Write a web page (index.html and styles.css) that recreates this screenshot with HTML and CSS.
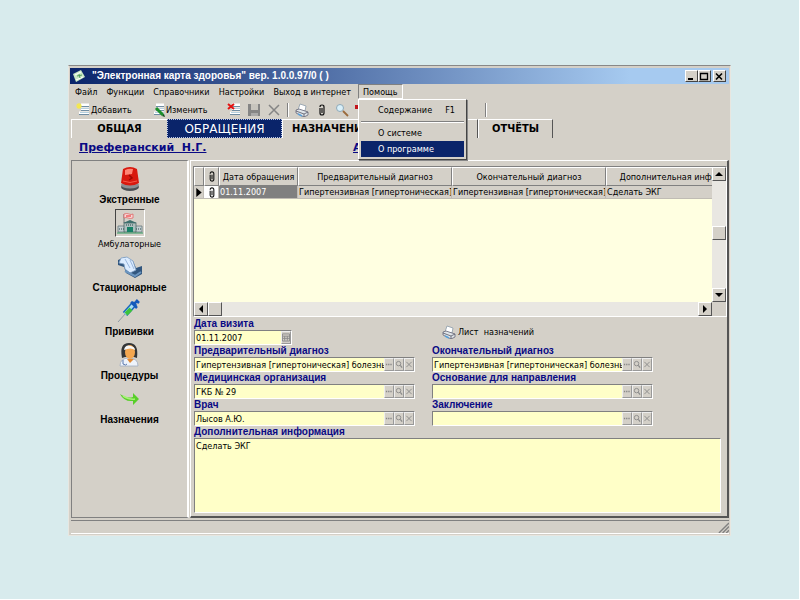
FILE: index.html
```html
<!DOCTYPE html>
<html lang="ru">
<head>
<meta charset="utf-8">
<title>Электронная карта здоровья</title>
<link rel="stylesheet" href="styles.css">
</head>
<body>
<svg class="defs" aria-hidden="true">
  <symbol id="clip" viewBox="0 0 8 12"><path d="M2 4v5q0 2 2 2t2-2V3q0-2-2-2T2 3M4 4v5" fill="none" stroke="#111" stroke-width="1.2"/></symbol>
  <symbol id="printer" viewBox="0 0 14 14"><path d="M3 7 5 1l6 2-1 5z" fill="#fff" stroke="#8a9aa8" stroke-width=".8"/><path d="M1 7l3-1 6 2 3 1v3l-4 2-8-4z" fill="#dfe4e8" stroke="#667" stroke-width=".8"/><path d="M1 8l8 3 4-2M9 11v3" fill="none" stroke="#556" stroke-width=".8"/><path d="M3 11l4 2" stroke="#5aa0d8" stroke-width="1.5"/></symbol>
  <symbol id="lens" viewBox="0 0 9 11"><circle cx="4" cy="4.500" r="2.500" fill="none" stroke="#888" /><path d="M6 6.500l2 2.500" stroke="#888" stroke-width="1.300"/></symbol>
  <symbol id="dots" viewBox="0 0 9 11"><path d="M1 5.500h7" stroke="#888" stroke-width="1.500" stroke-dasharray="1.500 1"/></symbol>
  <symbol id="cross" viewBox="0 0 9 11"><path d="M1.500 2.500l6 6m0-6l-6 6" stroke="#888"/></symbol>
  <symbol id="list" viewBox="0 0 14 14"><path d="M5 2h8M5 6h8M3 10h10" stroke="#fff" stroke-width="3"/><path d="M5 3.500h8M5 7.500h8M3 11.500h10" stroke="#6f8da3"/><path d="M5 5.500h8M4 9.500h9" stroke="#b5d0df"/></symbol>
</svg>
<main class="window">
  <header class="titlebar">
    <svg class="app-icon" viewBox="0 0 12 12"><path d="M0 4l8-4 4 7-9 5z" fill="#c9e8c4"/><path d="M2 5l6-3M3 10l7-3" stroke="#fff"/><path d="M6 4l1 4M4 6l5-1" stroke="#4f9b58"/></svg>
    <h1>"Электронная карта здоровья" вер. 1.0.0.97/0 ( )</h1>
    <button class="win-btn" aria-label="Свернуть"><svg viewBox="0 0 10 9"><path d="M2 7h5" stroke="#000" stroke-width="2"/></svg></button>
    <button class="win-btn" aria-label="Развернуть"><svg viewBox="0 0 10 9"><path d="M1.500 1v6.500h7V1M1 1.500h8" fill="none" stroke="#000" stroke-width="1.300"/></svg></button>
    <button class="win-btn close" aria-label="Закрыть"><svg viewBox="0 0 10 9"><path d="M2 1.500l6 6m0-6l-6 6" stroke="#000" stroke-width="1.600"/></svg></button>
  </header>

  <nav class="menubar">
    <button>Файл</button><button>Функции</button><button>Справочники</button><button>Настройки</button><button>Выход в интернет</button>
    <div class="menu-holder">
      <button class="open">Помощь</button>
      <div class="popup">
        <button>Содержание<span>F1</span></button>
        <hr>
        <button>О системе</button>
        <button class="active">О программе</button>
      </div>
    </div>
  </nav>

  <div class="toolbar">
    <button class="tool add"><svg viewBox="0 0 14 14"><use href="#list"/><path d="M3 0v6M0 3h6M1 1l4 4M5 1L1 5" stroke="#f5e84c" stroke-width="1.200"/></svg>Добавить</button>
    <button class="tool edit"><svg viewBox="0 0 14 14"><use href="#list"/><path d="M5 5l7 7" stroke="#1c8f2a" stroke-width="3"/><path d="M11 13l3 1-1-3z" fill="#114b18"/></svg>Изменить</button>
    <button class="tool" aria-label="Удалить"><svg viewBox="0 0 14 14"><use href="#list"/><path d="M1 1l6 5M7 1L1 6" stroke="#e31414" stroke-width="2"/></svg></button>
    <button class="tool" aria-label="Сохранить"><svg viewBox="0 0 14 14"><path d="M1 1h12v12H1z" fill="#858585"/><path d="M4 1h7v6H4z" fill="#c8c5be"/><path d="M4 10h7v3H4z" fill="#aaa"/></svg></button>
    <button class="tool" aria-label="Отменить"><svg viewBox="0 0 14 14"><path d="M2 2l10 10M12 2L2 12" stroke="#858585" stroke-width="1.500"/></svg></button>
    <i class="sep"></i>
    <button class="tool" aria-label="Печать"><svg viewBox="0 0 14 14"><use href="#printer"/></svg></button>
    <button class="tool" aria-label="Вложение"><svg viewBox="0 0 14 14"><use href="#clip" y="1" height="12" width="14"/></svg></button>
    <button class="tool" aria-label="Поиск"><svg viewBox="0 0 14 14"><circle cx="5" cy="5" r="3.500" fill="#d9f0fa" stroke="#8fa9b8"/><path d="M8 8l5 5" stroke="#9a6a3c" stroke-width="1.800"/></svg></button>
    <button class="tool flag" aria-label="Метка"><svg viewBox="0 0 14 14"><path d="M0 2h7v4H0z" fill="#c3161c"/></svg></button>
    <i class="sep far"></i>
  </div>

  <div class="tabs" role="tablist">
    <button role="tab" class="t1">ОБЩАЯ</button>
    <button role="tab" class="t2" aria-selected="true">ОБРАЩЕНИЯ</button>
    <button role="tab" class="t3">НАЗНАЧЕНИЯ</button>
    <button role="tab" class="t4">ОТЧЁТЫ</button>
  </div>

  <div class="patient"><a href="#">Преферанский&nbsp; Н.Г.</a><a href="#">А</a></div>

  <div class="content">
    <aside class="side">
      <button><svg viewBox="0 0 26 26"><ellipse cx="13" cy="21" rx="9" ry="4" fill="#4b4f54"/><ellipse cx="13" cy="19" rx="9" ry="3.500" fill="#8b8f94"/><path d="M6 3q7-4 14 0l2 14q-9 5-18 0z" fill="#d8190f"/><path d="M8 4q4-2 8-1l-1 5-7 1z" fill="#ff8575"/><path d="M12 9l3 3-3 2" fill="none" stroke="#9b0904" stroke-width="1.500"/><path d="M6 15q7 3 14 0" stroke="#f9594a" fill="none"/></svg>Экстренные</button>
      <button class="pressed"><span class="frame"><svg viewBox="0 0 26 26"><path d="M7 13V4" stroke="#777"/><path d="M7 4q3-1 5 0t4 0v4q-3 1-5 0t-4 0z" fill="#f6d8d8" stroke="#e05a5a" stroke-width=".7"/><path d="M9 6h5" stroke="#e22"/><path d="M1 16h7v6H1zM18 16h7v6h-7z" fill="#c4cfd2" stroke="#64777c" stroke-width=".8"/><path d="M7 13h12v9H7z" fill="#aebfbe" stroke="#4d6865" stroke-width=".8"/><path d="M6 13l7-3 7 3z" fill="#3e6f6d"/><path d="M10 17h6v5h-6z" fill="#178067"/><path d="M2 19h5M19 19h5M9 15h8" stroke="#29494c" stroke-dasharray="1 1"/><path d="M0 23h26" stroke="#2f9960"/></svg></span>Амбулаторные</button>
      <button><svg viewBox="0 0 26 26"><path d="M1 6l7-3 8 4 3 7 6-2v8l-7 4-9-5-2-6-6-2z" fill="#31567e"/><path d="M4 4l6-1 6 4 3 9-6 3-5-4-1-5-5-1z" fill="#dcecff" stroke="#809fc4" stroke-width=".8"/><path d="M8 5l5 9M13 6l4 9" stroke="#9ab7dd"/><path d="M8 17l10 5 6-4" stroke="#6b95bf" stroke-width="2" fill="none"/></svg>Стационарные</button>
      <button><svg viewBox="0 0 26 26"><path d="M2 24l8-9" stroke="#8d99a5"/><path d="M9 16L19 5" stroke="#1868bd" stroke-width="6"/><path d="M9 16L18 6" stroke="#a8dcf5" stroke-width="3"/><path d="M10 16l5-5" stroke="#3dc33b" stroke-width="4"/><path d="M15 4l6 6M18 6l3-3M20 2l3 3" stroke="#1559bb" stroke-width="2.500"/></svg>Прививки</button>
      <button><svg viewBox="0 0 26 26"><path d="M4 24q0-8 9-8t9 8z" fill="#eef3fb" stroke="#9eabc0" stroke-width=".8"/><path d="M6 16Q3 1 13 1t8 15l-3-1H9z" fill="#343638"/><ellipse cx="14" cy="10" rx="5" ry="7" fill="#f3a64f"/><path d="M8 8q1-6 7-4 4 1 4 4-4-3-11 0" fill="#f7f7f7"/><path d="M11 17l3 4 4-4" fill="#e38931"/><path d="M7 18v4q3 2 4 0" stroke="#5b78ac" fill="none"/></svg>Процедуры</button>
      <button><svg viewBox="0 0 26 26"><path d="M3 8q7 5 13 3V7l6 6-6 6v-4Q7 16 3 8" fill="#58cf29"/><path d="M6 10q7 4 12 3" stroke="#a8f278" stroke-width="1.500" fill="none"/></svg>Назначения</button>
    </aside>

    <section class="main">
      <div class="grid">
        <div class="viewport">
          <table>
            <colgroup><col class="c0"><col class="c1"><col class="c2"><col class="c3"><col class="c3"><col class="c5"></colgroup>
            <thead><tr><th></th><th><svg class="clip" viewBox="0 0 8 12"><use href="#clip"/></svg></th><th>Дата обращения</th><th>Предварительный диагноз</th><th>Окончательный диагноз</th><th>Дополнительная информация</th></tr></thead>
            <tbody><tr><td class="marker"><svg viewBox="0 0 6 10"><path d="M0 0l6 5-6 5z"/></svg></td><td class="attach"><svg class="clip" viewBox="0 0 8 12"><use href="#clip"/></svg></td><td class="current">01.11.2007</td><td>Гипертензивная [гипертоническая]</td><td>Гипертензивная [гипертоническая]</td><td>Сделать ЭКГ</td></tr></tbody>
          </table>
        </div>
        <div class="vbar"><button aria-label="Вверх"><svg viewBox="0 0 8 8"><path d="M0 6l4-4 4 4z"/></svg></button><i></i><button aria-label="Вниз"><svg viewBox="0 0 8 8"><path d="M0 2l4 4 4-4z"/></svg></button></div>
        <div class="hbar"><button aria-label="Влево"><svg viewBox="0 0 8 8"><path d="M6 0L2 4l4 4z"/></svg></button><i></i><button aria-label="Вправо"><svg viewBox="0 0 8 8"><path d="M2 0l4 4-4 4z"/></svg></button></div>
      </div>

      <form class="form">
        <div class="field date"><label for="visit">Дата визита</label><div class="box"><input id="visit" value="01.11.2007"><button type="button" aria-label="Календарь"><svg viewBox="0 0 9 11"><path d="M.5 1.500h8v8h-8zM1 4h8M3 4v5M6 4v5M1 6.500h8" fill="none" stroke="#888"/></svg></button></div></div>
        <button type="button" class="sheet"><svg viewBox="0 0 14 14"><use href="#printer"/></svg>Лист&nbsp; назначений</button>
        <div class="field"><label for="pre">Предварительный диагноз</label><div class="box"><input id="pre" value="Гипертензивная [гипертоническая] болезнь"><button type="button" aria-label="Выбрать"><svg><use href="#dots"/></svg></button><button type="button" aria-label="Найти"><svg><use href="#lens"/></svg></button><button type="button" aria-label="Очистить"><svg><use href="#cross"/></svg></button></div></div>
        <div class="field"><label for="fin">Окончательный диагноз</label><div class="box"><input id="fin" value="Гипертензивная [гипертоническая] болезнь"><button type="button" aria-label="Выбрать"><svg><use href="#dots"/></svg></button><button type="button" aria-label="Найти"><svg><use href="#lens"/></svg></button><button type="button" aria-label="Очистить"><svg><use href="#cross"/></svg></button></div></div>
        <div class="field"><label for="org">Медицинская организация</label><div class="box"><input id="org" value="ГКБ № 29"><button type="button" aria-label="Выбрать"><svg><use href="#dots"/></svg></button><button type="button" aria-label="Найти"><svg><use href="#lens"/></svg></button><button type="button" aria-label="Очистить"><svg><use href="#cross"/></svg></button></div></div>
        <div class="field"><label for="reason">Основание для направления</label><div class="box"><input id="reason"><button type="button" aria-label="Выбрать"><svg><use href="#dots"/></svg></button><button type="button" aria-label="Найти"><svg><use href="#lens"/></svg></button><button type="button" aria-label="Очистить"><svg><use href="#cross"/></svg></button></div></div>
        <div class="field"><label for="doc">Врач</label><div class="box"><input id="doc" value="Лысов А.Ю."><button type="button" aria-label="Выбрать"><svg><use href="#dots"/></svg></button><button type="button" aria-label="Найти"><svg><use href="#lens"/></svg></button><button type="button" aria-label="Очистить"><svg><use href="#cross"/></svg></button></div></div>
        <div class="field"><label for="concl">Заключение</label><div class="box"><input id="concl"><button type="button" aria-label="Выбрать"><svg><use href="#dots"/></svg></button><button type="button" aria-label="Найти"><svg><use href="#lens"/></svg></button><button type="button" aria-label="Очистить"><svg><use href="#cross"/></svg></button></div></div>
      </form>
      <div class="notes"><label for="notes">Дополнительная информация</label><textarea id="notes">Сделать ЭКГ</textarea></div>
    </section>
  </div>

  <footer class="status"><svg viewBox="0 0 12 12"><path d="M1 12L12 1M5 12l7-7M9 12l3-3" stroke="#808080" stroke-width="1.500"/></svg></footer>
</main>
</body>
</html>
```
FILE: styles.css
```css
:root {
  --face: #d4d0c8;
  --dark: #808080;
  --navy: #0a246a;
  --label: #0a0a84;
  --cream: #ffffc8;
  --ui: "DejaVu Sans Condensed", "DejaVu Sans", sans-serif;
  --ms: "Liberation Sans", Arial, sans-serif;
  --wide: "DejaVu Sans", sans-serif;
}
* { box-sizing: border-box; }
body {
  margin: 0;
  min-height: 100vh;
  padding: 65px 68px 63px;
  display: flex;
  background: #d8ebed;
  border: solid #fff;
  border-width: 0 1px 1px 0;
  font: 9px/12px var(--ui);
  color: #000;
}
button {
  font: inherit;
  color: inherit;
  margin: 0;
  padding: 0;
  border: 0;
  background: none;
  white-space: nowrap;
}
svg { display: block; flex: none; }
.defs { position: absolute; width: 0; height: 0; }
.window {
  flex: 1;
  min-width: 0;
  display: flex;
  flex-direction: column;
  background: var(--face);
  border: 1px solid #e8e6e0;
  border-top-color: #888;
  padding: 2px 1px 1px;
}
.titlebar {
  display: flex;
  align-items: center;
  height: 16px;
  padding: 0 3px;
  background: linear-gradient(90deg, #0a246a, #a6caf0 85%);
  color: #fff;
}
.titlebar h1 { flex: 1; margin: 0 0 0 7px; font: bold 10px/14px var(--ms); white-space: nowrap; }
.app-icon { width: 12px; height: 12px; }
.win-btn {
  width: 13px;
  height: 12px;
  background: var(--face);
  border: 1px solid;
  border-color: #fff #444 #444 #fff;
}
.win-btn svg { width: 10px; height: 9px; }
.win-btn.close { margin-left: 2px; }

.menubar { display: flex; gap: 9px; height: 16px; padding-left: 5px; }
.menu-holder { position: relative; margin-left: -2px; }
.open { height: 15px; padding: 1px 4px 0; border: 1px solid; border-color: var(--dark) #fff #fff var(--dark); }
.popup {
  position: absolute;
  z-index: 2;
  top: 15px;
  left: 0;
  width: 109px;
  padding: 2px;
  background: var(--face);
  border: 1px solid;
  border-color: #fff #444 #444 #fff;
  box-shadow: 1px 1px 0 #888;
}
.popup button { display: flex; justify-content: space-between; align-items: center; width: 100%; height: 16px; padding: 0 9px 0 17px; }
.popup hr { margin: 3px 0 2px; border: 0; border-top: 1px solid var(--dark); border-bottom: 1px solid #fff; }
.popup .active { background: var(--navy); color: #fff; }

.toolbar { display: flex; align-items: center; height: 19px; padding-left: 6px; }
.tool { display: flex; align-items: center; width: 20px; }
.tool svg { width: 14px; height: 14px; }
.tool.add { width: 75px; gap: 1px; }
.tool.edit { width: 76px; gap: 1px; }
.tool.flag { width: 12px; }
.sep { width: 2px; height: 14px; margin-right: 6px; border-left: 1px solid var(--dark); border-right: 1px solid #fff; }
.sep.far { margin-left: 118px; }

.tabs { display: flex; height: 19px; padding-left: 1px; font: bold 11px/16px "DejaVu Sans Condensed", var(--wide); }
.tabs button { display: block; border-top: 1px solid #fff; border-left: 1px solid #fff; text-align: center; }
.t1 { width: 96px; }
.tabs .t2 { width: 115px; border: 1px dotted #b9c6e8; background: var(--navy); color: #fff; font: 12px/14px var(--wide); }
.tabs .t3 { width: 196px; padding-left: 9px; text-align: left; border-right: 1px solid #555; }
.tabs .t4 { width: 75px; border-right: 1px solid #555; }

.patient { display: flex; height: 22px; padding: 3px 0 0 9px; font: bold 11px/14px var(--wide); }
.patient a { color: var(--label); flex: 0 0 274px; }

.content { flex: 1; display: flex; }
.side {
  width: 118px;
  margin-left: 1px;
  padding-top: 4px;
  border: 1px solid;
  border-color: var(--dark) #fff var(--dark) var(--dark);
  border-right-width: 2px;
  display: flex;
  flex-direction: column;
  align-items: center;
  font: bold 10px/12px var(--ms);
}
.side button { display: flex; flex-direction: column; align-items: center; height: 44px; }
.side svg { width: 26px; height: 26px; margin: 1px 0 2px; }
.side .pressed { font: 9px/12px var(--ui); }
.frame { border: 1px solid; border-color: #444 #fff #fff #444; padding: 0 1px; margin-bottom: 1px; }
.side .frame svg { margin: 0; }

.main {
  flex: 1;
  min-width: 0;
  margin-left: 1px;
  padding: 5px 0 3px 2px;
  border: 1px solid;
  border-color: #fff #555 #555 #fff;
  border-right-width: 2px;
  border-bottom-width: 2px;
  display: flex;
  flex-direction: column;
}
.grid {
  display: grid;
  grid-template-columns: minmax(0, 1fr) 14px;
  grid-template-rows: 135px 14px;
  border: 1px solid;
  border-color: var(--dark) #fff #fff var(--dark);
}
.viewport { overflow: hidden; background: #ffffe1; }
table { table-layout: fixed; width: 568px; border-collapse: separate; border-spacing: 0; }
.c0 { width: 10px; }
.c1 { width: 15px; }
.c2 { width: 79px; }
.c3 { width: 154px; }
.c5 { width: 156px; }
th, td { padding: 0; overflow: hidden; white-space: nowrap; font-weight: normal; }
th { height: 19px; background: var(--face); border: 1px solid; border-color: #fff var(--dark) var(--dark) #fff; vertical-align: middle; }
td { height: 13px; padding-left: 1px; background: var(--face); border-right: 1px solid #c0bcb4; border-bottom: 1px solid #c0bcb4; }
.clip { width: 8px; height: 11px; margin: auto; }
.marker svg { width: 6px; height: 9px; margin-left: 1px; }
td.attach { background: #fff; }
td.current { background: var(--dark); color: #fff; }
.vbar, .hbar { display: flex; background: #e9e7e2; }
.vbar { flex-direction: column; }
.vbar i { margin: auto 0 48px; }
.hbar button:last-child { margin-left: auto; }
.vbar button, .hbar button, .vbar i, .hbar i {
  width: 14px;
  height: 14px;
  padding: 2px;
  background: var(--face);
  border: 1px solid;
  border-color: #fff #555 #555 #fff;
}
.vbar svg, .hbar svg { width: 8px; height: 8px; }

.form {
  display: grid;
  grid-template-columns: 221px 221px;
  grid-auto-rows: 27px;
  column-gap: 17px;
  padding: 1px 0 0 1px;
}
label { display: block; height: 12px; font: bold 10px/12px var(--ms); color: var(--label); white-space: nowrap; }
.box { display: flex; height: 15px; border: 1px solid; border-color: var(--dark) #fff #fff var(--dark); background: var(--cream); }
.date .box { width: 98px; }
.box input { flex: 1; min-width: 0; padding: 0 0 0 1px; border: 0; outline: 0; background: none; font: inherit; }
.box button { width: 10px; background: var(--face); border: 1px solid; border-color: #eee #999 #999 #eee; }
.box svg { width: 8px; height: 11px; }
.sheet { display: flex; align-items: center; align-self: center; gap: 2px; padding-left: 10px; }
.sheet svg { width: 14px; height: 14px; }
.notes { flex: 1; display: flex; flex-direction: column; padding: 0 6px 0 1px; }
.notes textarea { flex: 1; width: 100%; resize: none; padding: 1px; border: 1px solid; border-color: var(--dark) #fff #fff var(--dark); background: var(--cream); font: inherit; outline: 0; }

.status {
  display: flex;
  justify-content: flex-end;
  align-items: flex-end;
  height: 14px;
  margin: 2px 0 0 1px;
  border-top: 1px solid var(--dark);
  border-bottom: 1px solid #fff;
}
.status svg { width: 11px; height: 11px; }
```
